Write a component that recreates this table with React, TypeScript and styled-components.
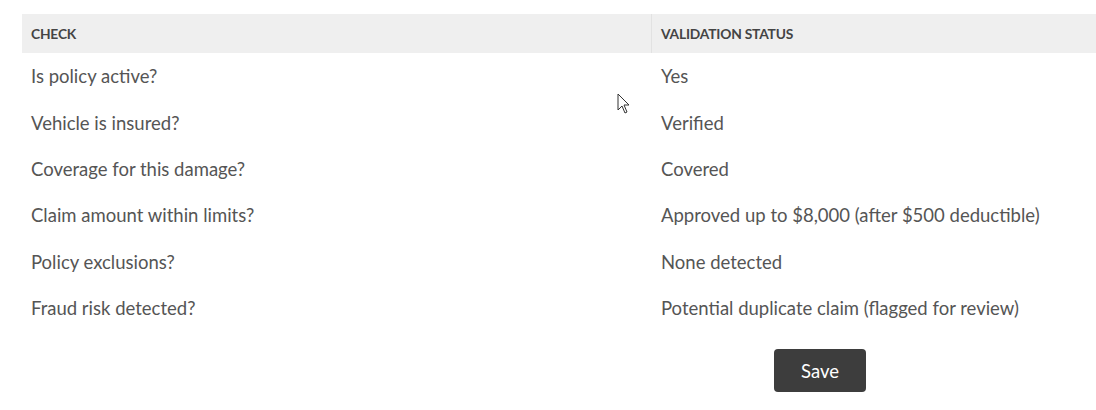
import React from "react";
import styled, { createGlobalStyle } from "styled-components";

const Global = createGlobalStyle`
  html, body { margin: 0; padding: 0; background: #fff; overflow: hidden; }
  body { font-family: Lato, "Open Sans", sans-serif; }
`;

const Page = styled.div`
  position: relative;
  width: 1096px;
  height: 410px;
  overflow: hidden;
  padding: 14px 0 0 22px;
  box-sizing: border-box;
`;

const Table = styled.div`
  width: 1110px;
  display: grid;
  grid-template-columns: 629px 1fr;
`;

const HeadCell = styled.div<{ $divider?: boolean }>`
  background: #efefef;
  height: 39px;
  display: flex;
  align-items: center;
  padding-left: ${(p) => (p.$divider ? "9px" : "9px")};
  border-left: ${(p) => (p.$divider ? "1px solid #e2e2e2" : "none")};
  font-size: 13.8px;
  font-weight: 700;
  color: #444;
  letter-spacing: -0.2px;
  text-transform: uppercase;
`;

const Cell = styled.div<{ $second?: boolean }>`
  height: 46.4px;
  display: flex;
  align-items: center;
  padding-left: ${(p) => (p.$second ? "10px" : "9px")};
  font-size: 18.5px;
  color: #555;
`;

const Actions = styled.div`
  display: flex;
  padding: 18px 0 0 752px;
`;

const SaveButton = styled.button`
  width: 92px;
  height: 43px;
  background: #3d3d3d;
  border: none;
  border-radius: 4px;
  color: #fff;
  font-family: Lato, sans-serif;
  font-size: 18.5px;
  cursor: pointer;
`;

const Cursor = styled.svg`
  position: absolute;
  left: 617px;
  top: 93px;
`;

const rows: [string, string][] = [
  ["Is policy active?", "Yes"],
  ["Vehicle is insured?", "Verified"],
  ["Coverage for this damage?", "Covered"],
  ["Claim amount within limits?", "Approved up to $8,000 (after $500 deductible)"],
  ["Policy exclusions?", "None detected"],
  ["Fraud risk detected?", "Potential duplicate claim (flagged for review)"],
];

export default function App() {
  return (
    <Page>
      <Global />
      <Table>
        <HeadCell>Check</HeadCell>
        <HeadCell $divider>Validation Status</HeadCell>
        {rows.map(([a, b]) => (
          <React.Fragment key={a}>
            <Cell>{a}</Cell>
            <Cell $second>{b}</Cell>
          </React.Fragment>
        ))}
      </Table>
      <Actions>
        <SaveButton>Save</SaveButton>
      </Actions>
      <Cursor width="14" height="22" viewBox="0 0 14 22">
        <path d="M1 1 L1 17 L5 13 L8 20 L10 19 L7 12 L12 12 Z" fill="#fff" stroke="#333" strokeWidth="1" strokeLinejoin="round" />
      </Cursor>
    </Page>
  );
}
